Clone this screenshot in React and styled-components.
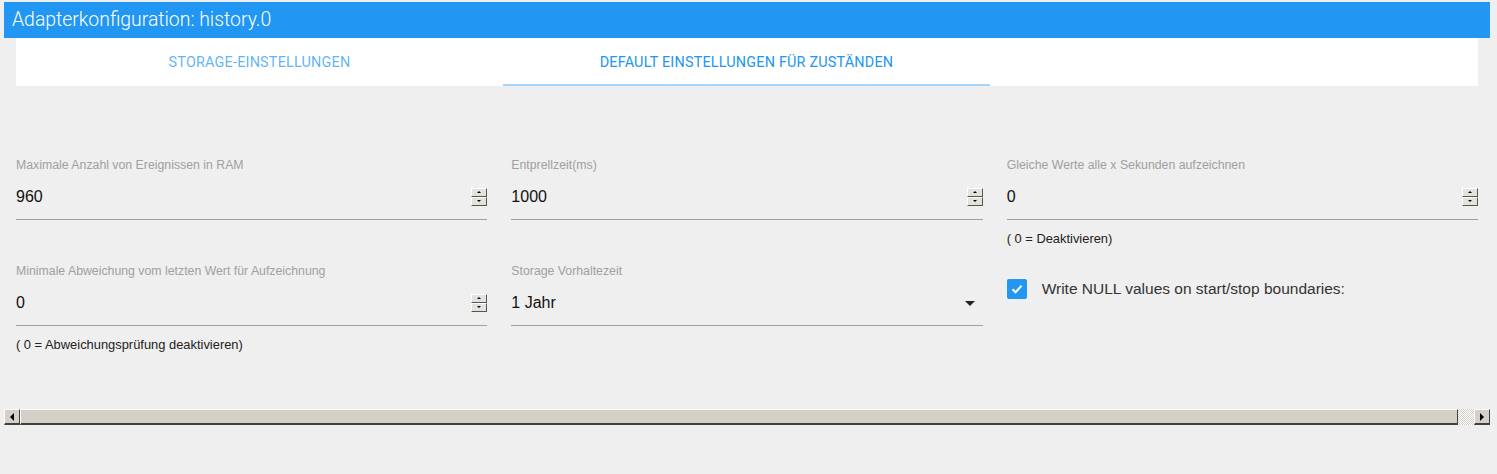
import React from "react";
import styled, { createGlobalStyle } from "styled-components";

const GlobalStyle = createGlobalStyle`
  body {
    margin: 0;
    background: #efefef;
    font-family: "Liberation Sans", Arial, sans-serif;
  }
`;

const fields = [
  { label: "Maximale Anzahl von Ereignissen in RAM", value: "960", kind: "number" },
  { label: "Entprellzeit(ms)", value: "1000", kind: "number" },
  {
    label: "Gleiche Werte alle x Sekunden aufzeichnen",
    value: "0",
    kind: "number",
    help: "( 0 = Deaktivieren)",
  },
  {
    label: "Minimale Abweichung vom letzten Wert für Aufzeichnung",
    value: "0",
    kind: "number",
    help: "( 0 = Abweichungsprüfung deaktivieren)",
  },
  { label: "Storage Vorhaltezeit", value: "1 Jahr", kind: "select" },
  { label: "Write NULL values on start/stop boundaries:", kind: "checkbox" },
];

const App = () => {
  return (
    <>
      <GlobalStyle />
      <Page>
        <TitleBar>Adapterkonfiguration: history.0</TitleBar>
        <Body>
          <Tabs>
            <Tab>STORAGE-EINSTELLUNGEN</Tab>
            <Tab active>DEFAULT EINSTELLUNGEN FÜR ZUSTÄNDEN</Tab>
          </Tabs>
          <Grid>
            {fields.map((f) =>
              f.kind === "checkbox" ? (
                <CheckCell key={f.label}>
                  <CheckBox>
                    <svg width="14" height="14" viewBox="0 0 14 14">
                      <path
                        d="M2.5 7.2 L5.6 10.2 L11.5 3.8"
                        fill="none"
                        stroke="#fff"
                        strokeWidth="2"
                      />
                    </svg>
                  </CheckBox>
                  <CheckLabel>{f.label}</CheckLabel>
                </CheckCell>
              ) : (
                <Field key={f.label}>
                  <Label>{f.label}</Label>
                  <InputRow>
                    <Value>{f.value}</Value>
                    {f.kind === "number" ? (
                      <Spinner>
                        <SpinButton>
                          <Arrow up />
                        </SpinButton>
                        <SpinButton>
                          <Arrow />
                        </SpinButton>
                      </Spinner>
                    ) : (
                      <Caret />
                    )}
                  </InputRow>
                  {f.help && <Help>{f.help}</Help>}
                </Field>
              )
            )}
          </Grid>
        </Body>
        <ScrollBar>
          <ScrollButton>
            <ScrollArrow left />
          </ScrollButton>
          <Thumb />
          <Track />
          <ScrollButton>
            <ScrollArrow />
          </ScrollButton>
        </ScrollBar>
      </Page>
    </>
  );
};

export default App;

const Page = styled.div`
  width: 1486px;
  padding: 2px 0 0 4px;
  height: 472px;
`;

const TitleBar = styled.div`
  height: 36px;
  background: #2196f3;
  color: #fff;
  font-family: Roboto, "Liberation Sans", sans-serif;
  font-weight: 300;
  font-size: 19.4px;
  line-height: 36px;
  padding-left: 8px;
`;

const Body = styled.div`
  padding: 0 12px;
`;

const Tabs = styled.div`
  display: flex;
  height: 48px;
  background: #fff;
`;

const Tab = styled.div`
  width: 487px;
  display: flex;
  align-items: center;
  justify-content: center;
  box-sizing: border-box;
  font-family: Roboto, "Liberation Sans", sans-serif;
  font-size: 14.4px;
  letter-spacing: 0.2px;
  color: ${(p) => (p.active ? "#2196f3" : "rgba(33, 150, 243, 0.72)")};
  border-bottom: 2px solid ${(p) => (p.active ? "#a7d5fb" : "transparent")};
  padding-top: 2px;
`;

const Grid = styled.div`
  display: grid;
  grid-template-columns: repeat(3, 1fr);
  column-gap: 24px;
  row-gap: 16px;
  padding-top: 71px;
`;

const Field = styled.div`
  display: flex;
  flex-direction: column;
`;

const Label = styled.div`
  font-size: 12.3px;
  line-height: 16px;
  color: #a0a0a0;
`;

const InputRow = styled.div`
  margin-top: 8px;
  height: 32px;
  padding-bottom: 6px;
  border-bottom: 1px solid #9e9e9e;
  display: flex;
  align-items: center;
  justify-content: space-between;
`;

const Value = styled.div`
  font-size: 16px;
  color: #111;
`;

const Spinner = styled.div`
  display: flex;
  flex-direction: column;
  margin-top: -1px;
`;

const SpinButton = styled.div`
  width: 14px;
  height: 7px;
  background: #e4e2dc;
  border-top: 1px solid #fff;
  border-left: 1px solid #fff;
  border-right: 1px solid #555;
  border-bottom: 1px solid #555;
  display: flex;
  align-items: center;
  justify-content: center;
`;

const Arrow = styled.div`
  width: 0;
  height: 0;
  border-left: 2px solid transparent;
  border-right: 2px solid transparent;
  ${(p) =>
    p.up ? "border-bottom: 2px solid #000;" : "border-top: 2px solid #000;"}
`;

const Caret = styled.div`
  width: 0;
  height: 0;
  border-left: 5px solid transparent;
  border-right: 5px solid transparent;
  border-top: 5px solid #222;
  margin-right: 8px;
`;

const Help = styled.div`
  margin-top: 11px;
  font-size: 12.9px;
  line-height: 16px;
  color: #222;
`;

const CheckCell = styled.div`
  display: flex;
  align-items: center;
  padding-top: 16px;
  align-self: start;
`;

const CheckBox = styled.div`
  width: 20px;
  height: 20px;
  border-radius: 2px;
  background: #2196f3;
  display: flex;
  align-items: center;
  justify-content: center;
`;

const CheckLabel = styled.div`
  margin-left: 15px;
  font-size: 15.5px;
  color: #333;
`;

const ScrollBar = styled.div`
  margin-top: 56px;
  display: flex;
  height: 16px;
`;

const ScrollButton = styled.div`
  width: 16px;
  height: 16px;
  box-sizing: border-box;
  background: #d4d0c8;
  border-top: 1px solid #fff;
  border-left: 1px solid #fff;
  border-right: 1px solid #404040;
  border-bottom: 2px solid #404040;
  display: flex;
  align-items: center;
  justify-content: center;
`;

const ScrollArrow = styled.div`
  width: 0;
  height: 0;
  border-top: 4px solid transparent;
  border-bottom: 4px solid transparent;
  ${(p) =>
    p.left ? "border-right: 4px solid #000;" : "border-left: 4px solid #000;"}
`;

const Thumb = styled.div`
  flex: 1;
  box-sizing: border-box;
  background: #d4d0c8;
  border-top: 1px solid #fff;
  border-left: 1px solid #fff;
  border-right: 1px solid #404040;
  border-bottom: 2px solid #404040;
`;

const Track = styled.div`
  width: 16px;
  background-color: #fff;
  background-image: linear-gradient(45deg, #d4d0c8 25%, transparent 25%, transparent 75%, #d4d0c8 75%),
    linear-gradient(45deg, #d4d0c8 25%, transparent 25%, transparent 75%, #d4d0c8 75%);
  background-size: 2px 2px;
  background-position: 0 0, 1px 1px;
`;
